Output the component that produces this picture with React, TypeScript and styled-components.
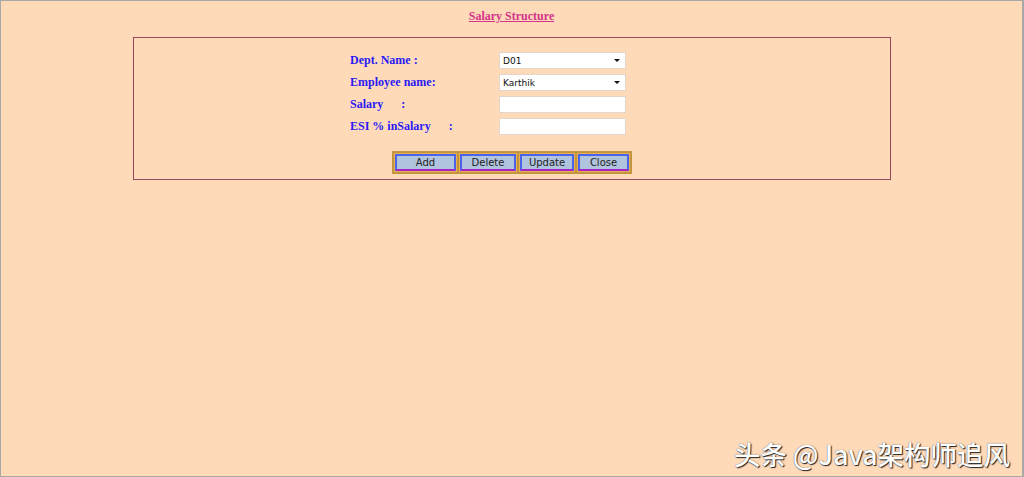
import styled, { createGlobalStyle } from "styled-components";

const GlobalStyle = createGlobalStyle`
  html, body {
    margin: 0;
    padding: 0;
    background: #ffdab9;
  }
  * {
    box-sizing: border-box;
  }
`;

const Page = styled.div`
  position: relative;
  height: 100vh;
  border: 1px solid #a8a8a8;
  border-right-width: 2px;
  background: #ffdab9;
  padding-top: 8px;
  overflow: hidden;
`;

const Title = styled.div`
  text-align: center;
  font-family: "Liberation Serif", "Times New Roman", serif;
  font-weight: bold;
  font-size: 12px;
  line-height: 14px;
  color: #d6338a;
  text-decoration: underline;
`;

const Panel = styled.div`
  margin: 14px 131px 0 132px;
  border: 1px solid #9c4a64;
  padding: 14px 0 5px 0;
`;

const Form = styled.div`
  display: grid;
  grid-template-columns: 149px 127px;
  row-gap: 5px;
  margin-left: 216px;
`;

const Label = styled.div`
  font-family: "Liberation Serif", "Times New Roman", serif;
  font-weight: bold;
  font-size: 12px;
  line-height: 17px;
  color: #2a1bf5;
  white-space: pre;
`;

const Field = styled.div`
  height: 17px;
  background: #ffffff;
  border: 1px solid #e2d6cc;
  display: flex;
  align-items: center;
  justify-content: space-between;
  padding: 0 5px 0 3px;
  font-family: "DejaVu Sans", Tahoma, sans-serif;
  font-size: 9px;
  color: #111;
`;

const Caret = styled.span`
  width: 0;
  height: 0;
  border-left: 3px solid transparent;
  border-right: 3px solid transparent;
  border-top: 3px solid #111;
`;

const ButtonBar = styled.div`
  display: flex;
  justify-content: center;
  margin-top: 16px;
`;

const ButtonGroup = styled.div`
  display: flex;
  background: #e4ac4c;
  border: 1px solid #c4953f;
`;

const Cell = styled.div`
  padding: 1px;
  border: 1px solid #c4953f;
  background: #e8b050;
`;

const Button = styled.button<{ w: number }>`
  display: block;
  width: ${(p) => p.w}px;
  height: 17px;
  margin: 0;
  padding: 0;
  background: #b0c4de;
  border: 2px solid #4b63ea;
  border-bottom-color: #a524c8;
  font-family: "DejaVu Sans", Tahoma, sans-serif;
  font-size: 10px;
  line-height: 12px;
  color: #222;
`;

const Watermark = styled.div`
  position: absolute;
  right: 12px;
  bottom: 6px;
  font-family: "Noto Sans CJK SC", "Noto Sans", sans-serif;
  font-size: 26.5px;
  font-weight: 500;
  line-height: 32px;
  color: #ffffff;
  text-shadow: 1px 1px 1px #222, 0 0 1px #444;
`;

const fields = [
  { label: "Dept. Name :", value: "D01", select: true },
  { label: "Employee name:", value: "Karthik", select: true },
  { label: "Salary      :", value: "", select: false },
  { label: "ESI % inSalary      :", value: "", select: false },
];

const buttons = [
  { text: "Add", w: 61 },
  { text: "Delete", w: 56 },
  { text: "Update", w: 54 },
  { text: "Close", w: 51 },
];

const App = () => {
  return (
    <Page>
      <GlobalStyle />
      <Title>Salary Structure</Title>
      <Panel>
        <Form>
          {fields.map((f) => [
            <Label key={f.label}>{f.label}</Label>,
            <Field key={f.label + "-f"}>
              <span>{f.value}</span>
              {f.select && <Caret />}
            </Field>,
          ])}
        </Form>
        <ButtonBar>
          <ButtonGroup>
            {buttons.map((b) => (
              <Cell key={b.text}>
                <Button w={b.w}>{b.text}</Button>
              </Cell>
            ))}
          </ButtonGroup>
        </ButtonBar>
      </Panel>
      <Watermark>头条 @Java架构师追风</Watermark>
    </Page>
  );
};

export default App;
